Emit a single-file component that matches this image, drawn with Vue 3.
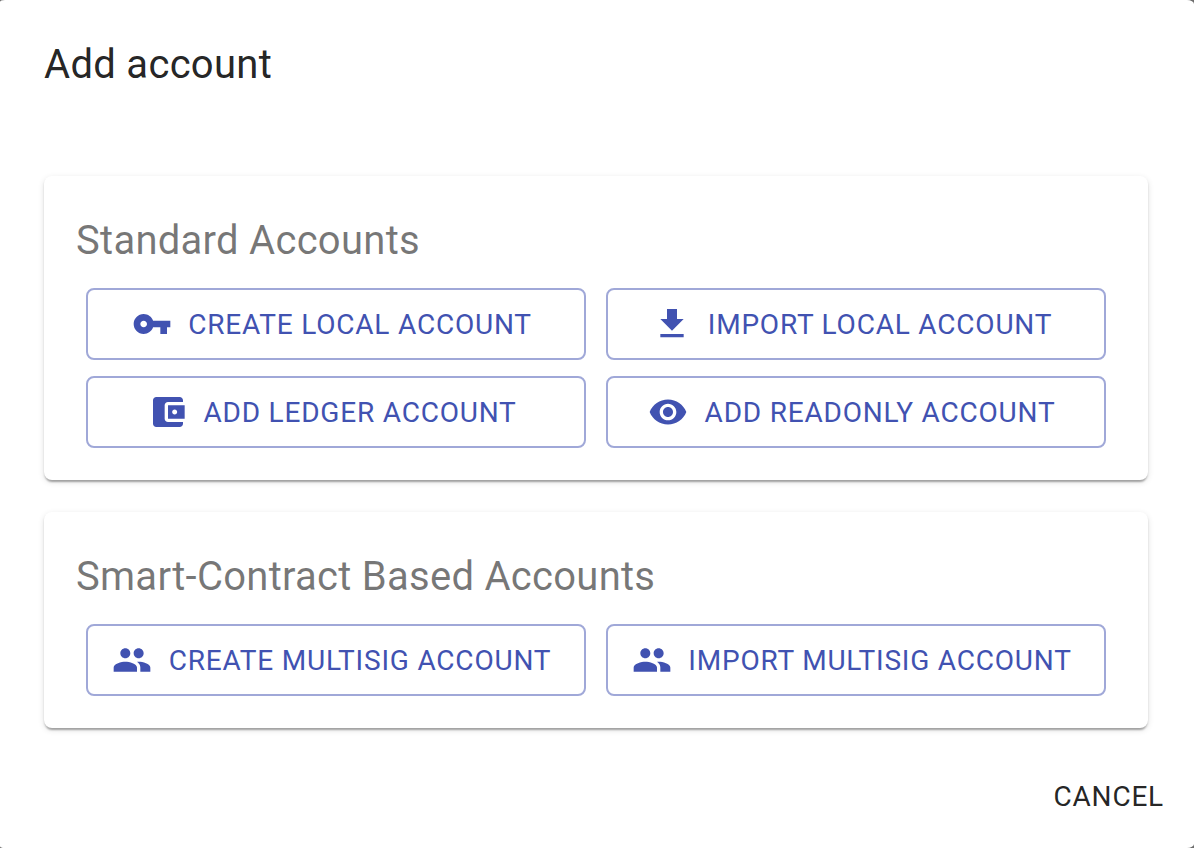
<script setup>
const icons = {
  key: 'M12.65 10C11.83 7.67 9.61 6 7 6c-3.31 0-6 2.69-6 6s2.69 6 6 6c2.61 0 4.83-1.67 5.65-4H17v4h4v-4h2v-4H12.65zM7 14c-1.1 0-2-.9-2-2s.9-2 2-2 2 .9 2 2-.9 2-2 2z',
  download: 'M19 9h-4V3H9v6H5l7 7 7-7zM5 18v2h14v-2H5z',
  wallet: 'M21 18v1c0 1.1-.9 2-2 2H5c-1.11 0-2-.9-2-2V5c0-1.1.89-2 2-2h14c1.1 0 2 .9 2 2v1h-9c-1.11 0-2 .9-2 2v8c0 1.1.89 2 2 2h9zm-9-2h10V8H12v8zm4-2.5c-.83 0-1.500-.67-1.500-1.500s.67-1.500 1.500-1.500 1.500.67 1.500 1.500-.67 1.500-1.500 1.500z',
  eye: 'M12 4.500C7 4.500 2.730 7.610 1 12c1.730 4.390 6 7.500 11 7.500s9.270-3.110 11-7.500c-1.730-4.390-6-7.500-11-7.500zM12 17c-2.760 0-5-2.240-5-5s2.240-5 5-5 5 2.240 5 5-2.240 5-5 5zm0-8c-1.660 0-3 1.340-3 3s1.340 3 3 3 3-1.340 3-3-1.340-3-3-3z',
  people: 'M16 11c1.660 0 2.990-1.340 2.990-3S17.660 5 16 5c-1.660 0-3 1.340-3 3s1.340 3 3 3zm-8 0c1.660 0 2.990-1.340 2.990-3S9.660 5 8 5C6.340 5 5 6.340 5 8s1.340 3 3 3zm0 2c-2.330 0-7 1.170-7 3.500V19h14v-2.500c0-2.330-4.670-3.500-7-3.500zm8 0c-.29 0-.62.02-.97.05 1.160.84 1.970 1.970 1.970 3.450V19h6v-2.500c0-2.330-4.670-3.500-7-3.500z',
}

const groups = [
  {
    title: 'Standard Accounts',
    actions: [
      { label: 'Create local account', icon: icons.key },
      { label: 'Import local account', icon: icons.download },
      { label: 'Add Ledger account', icon: icons.wallet, align: 'nudge-right' },
      { label: 'Add readonly account', icon: icons.eye, align: 'nudge-left' },
    ],
  },
  {
    title: 'Smart-Contract Based Accounts',
    actions: [
      { label: 'Create multisig account', icon: icons.people, align: 'nudge-left' },
      { label: 'Import multisig account', icon: icons.people },
    ],
  },
]
</script>

<template>
  <div class="backdrop">
    <main class="dialog">
      <h1>Add account</h1>
      <section v-for="g in groups" :key="g.title" class="card">
        <h2>{{ g.title }}</h2>
        <div class="actions">
          <button v-for="a in g.actions" :key="a.label" class="action">
            <svg viewBox="0 0 24 24" :class="a.align"><path :d="a.icon" /></svg>
            <span>{{ a.label }}</span>
          </button>
        </div>
      </section>
      <footer><button class="cancel">Cancel</button></footer>
    </main>
  </div>
</template>

<style>
body { margin: 0; }
</style>

<style scoped>
.backdrop { height: 848px; background: #6e6e6e; }
.dialog {
  box-sizing: border-box;
  height: 848px;
  padding: 32px 46px 0 44px;
  overflow: hidden;
  border-radius: 5px 7px 7px 5px / 2px 4px 4px 2px;
  background: #fff;
  font-family: Roboto, sans-serif;
}
h1, h2 { margin: 0; font-size: 40px; font-weight: 400; line-height: 66px; letter-spacing: 0.3px; white-space: nowrap; }
h1 { height: 144px; color: rgba(0, 0, 0, 0.87); }
h2 { height: 64px; color: rgba(0, 0, 0, 0.54); letter-spacing: 0.27px; }
.card {
  box-sizing: border-box;
  margin-bottom: 32px;
  padding: 32px;
  border-radius: 8px;
  background: #fff;
  box-shadow: 0 4px 2px -2px rgba(0, 0, 0, 0.2), 0 2px 2px rgba(0, 0, 0, 0.14), 0 2px 6px rgba(0, 0, 0, 0.12);
}
.actions { display: grid; grid-template-columns: 500px 500px; gap: 16px 20px; margin: 16px 0 0 10px; }
button { margin: 0; background: none; font: 400 28px/49px Roboto, sans-serif; letter-spacing: 0.8px; text-transform: uppercase; white-space: nowrap; }
.action {
  display: flex;
  align-items: center;
  justify-content: center;
  box-sizing: border-box;
  height: 72px;
  padding: 0 30px;
  border: 2px solid rgba(65, 82, 178, 0.5);
  border-radius: 8px;
  color: #4152b1;
}
.action svg { flex: none; width: 40px; height: 40px; margin: 0 16px 0 -8px; fill: currentColor; }
.action .nudge-left { transform: translateX(-1px); }
.action .nudge-right { transform: translateX(1px); }
footer { display: flex; justify-content: flex-end; margin: 44px -16px 0 0; }
.cancel { padding: 0; border: 0; color: rgba(0, 0, 0, 0.87); }
.card + footer { margin-top: 12px; padding-top: 12px; }
</style>
